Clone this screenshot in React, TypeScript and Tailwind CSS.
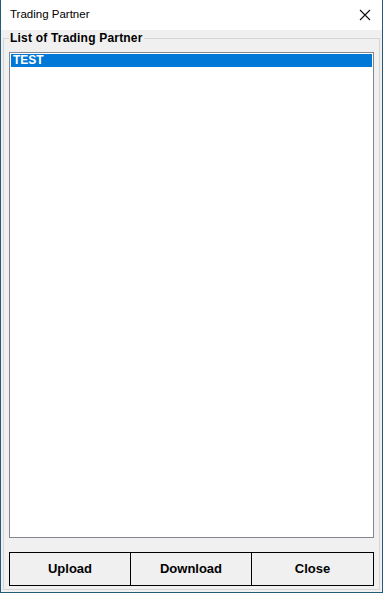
import React from "react";

export default function App() {
  return (
    <div
      className="w-[383px] h-[593px] bg-[#f0f0f0] border-l border-r border-b border-[#245a78] flex flex-col overflow-hidden"
      style={{ fontFamily: '"Liberation Sans", Arial, sans-serif' }}
    >
      {/* Title bar */}
      <div className="h-[30px] bg-white flex items-center justify-between pl-[9px] pr-[10px] shrink-0">
        <span className="text-[11.5px] text-black">Trading Partner</span>
        <svg width="12" height="12" viewBox="0 0 12 12" className="mr-[1px]">
          <path d="M1 1 L11 11 M11 1 L1 11" stroke="#111" strokeWidth="1.1" fill="none" />
        </svg>
      </div>

      {/* Client area */}
      <div className="flex-1 flex flex-col pt-[1px]">
        <fieldset className="ml-[2px] mr-[2px] border border-[#d5d5d5] px-[5px] pb-[3px] flex flex-col h-[559px]">
          <legend className="text-[12px] font-bold leading-[14px] text-black px-[1px] ml-[0px] tracking-[0.2px]">
            List of Trading Partner
          </legend>
          <div className="mt-[7px] h-[486px] border border-[#828790] bg-white p-[1px]">
            <div className="h-[13px] bg-[#0078d7] text-white text-[12px] font-bold leading-[13px] pl-[2px]">
              TEST
            </div>
          </div>
          <div className="mt-[14px] h-[34px] grid grid-cols-3 border border-black">
            <button className="bg-[#f0f0f0] text-[13px] font-bold text-black border-r border-black">
              Upload
            </button>
            <button className="bg-[#f0f0f0] text-[13px] font-bold text-black border-r border-black">
              Download
            </button>
            <button className="bg-[#f0f0f0] text-[13px] font-bold text-black">Close</button>
          </div>
        </fieldset>
      </div>
    </div>
  );
}
